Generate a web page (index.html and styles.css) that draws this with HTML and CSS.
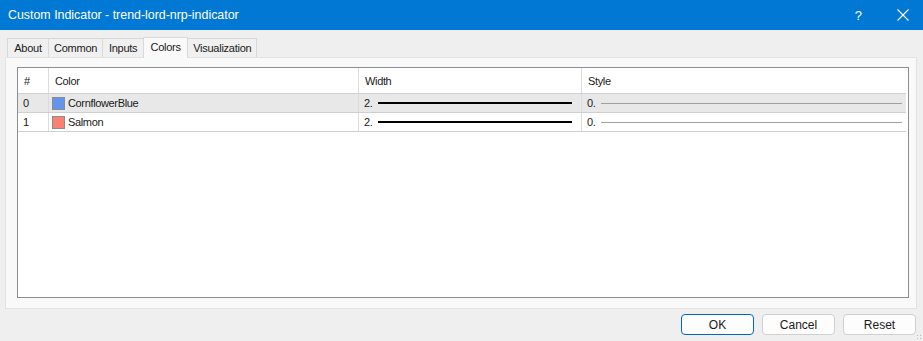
FILE: index.html
```html
<!DOCTYPE html>
<html lang="en">
<head>
    <meta charset="UTF-8">
    <title>Custom Indicator - trend-lord-nrp-indicator</title>
    <link rel="stylesheet" href="styles.css">
</head>
<body>
    <div class="dialog">
        <div class="titlebar">
            <span class="title">Custom Indicator - trend-lord-nrp-indicator</span>
            <div class="title-btns">
                <span class="help">?</span>
                <svg class="close" width="12" height="12" viewBox="0 0 12 12">
                    <path d="M0.5 0.5 L11.5 11.5 M11.5 0.5 L0.5 11.5" stroke="#ffffff" stroke-width="1.1" fill="none"/>
                </svg>
            </div>
        </div>

        <div class="body">
            <div class="tabs">
                <div class="tab">About</div>
                <div class="tab">Common</div>
                <div class="tab">Inputs</div>
                <div class="tab active">Colors</div>
                <div class="tab">Visualization</div>
            </div>

            <div class="panel">
                <div class="list">
                    <div class="row head">
                        <div class="cell num">#</div>
                        <div class="cell">Color</div>
                        <div class="cell">Width</div>
                        <div class="cell">Style</div>
                    </div>
                    <div class="row selected">
                        <div class="cell num">0</div>
                        <div class="cell"><span class="swatch blue"></span>CornflowerBlue</div>
                        <div class="cell">2. <span class="line thick"></span></div>
                        <div class="cell">0. <span class="line thin"></span></div>
                    </div>
                    <div class="row">
                        <div class="cell num">1</div>
                        <div class="cell"><span class="swatch salmon"></span>Salmon</div>
                        <div class="cell">2. <span class="line thick"></span></div>
                        <div class="cell">0. <span class="line thin"></span></div>
                    </div>
                </div>
            </div>

            <div class="buttons">
                <button class="btn default">OK</button>
                <button class="btn">Cancel</button>
                <button class="btn">Reset</button>
            </div>
            <div class="grip"></div>
        </div>
    </div>
</body>
</html>
```

FILE: styles.css
```css
html, body {
    margin: 0;
    padding: 0;
}
body {
    font-family: "Liberation Sans", Arial, sans-serif;
    font-size: 11px;
    color: #1a1a1a;
    background-color: #efefef;
}
.dialog {
    width: 923px;
    height: 341px;
    display: flex;
    flex-direction: column;
    background-color: #efefef;
}
.titlebar {
    height: 30px;
    background-color: #0078d4;
    color: #ffffff;
    display: flex;
    align-items: center;
    justify-content: space-between;
    padding: 0 14px 0 8px;
    box-sizing: border-box;
    flex-shrink: 0;
}
.title {
    font-size: 12.4px;
    padding-bottom: 1px;
}
.title-btns {
    display: flex;
    align-items: center;
    gap: 35px;
}
.help {
    font-size: 13px;
}
.close {
    display: block;
}
.body {
    position: relative;
    flex: 1;
    padding: 7px 6px 0 5px;
    display: flex;
    flex-direction: column;
}
.tabs {
    display: flex;
    align-items: flex-end;
    height: 20px;
    padding-left: 2px;
    position: relative;
    z-index: 1;
}
.tab {
    min-width: 42px;
    height: 19px;
    line-height: 19px;
    padding: 0 5px;
    text-align: center;
    background-color: #f0f0f0;
    border: 1px solid #d9d9d9;
    border-bottom: none;
    box-sizing: border-box;
    margin-right: -1px;
    font-size: 11px;
    letter-spacing: -0.25px;
}
.tab.active {
    min-width: 45px;
    height: 21px;
    line-height: 18px;
    background-color: #f9f9f9;
    margin-bottom: -1px;
}
.panel {
    height: 252px;
    background-color: #f9f9f9;
    border: 1px solid #e3e3e3;
    box-sizing: border-box;
    padding: 9px 7px 10px 11px;
}
.list {
    height: 100%;
    box-sizing: border-box;
    background-color: #ffffff;
    border: 1px solid #8c8d93;
}
.row {
    display: grid;
    grid-template-columns: 30px 310px 223px 1fr;
    height: 19px;
    border-bottom: 1px solid #cfcfcf;
    box-sizing: border-box;
    margin-right: 2px;
}
.row.head {
    height: 26px;
    border-bottom-color: #d2d2d2;
}
.row.selected {
    background-color: #e8e8e8;
}
.cell {
    display: flex;
    align-items: center;
    padding-left: 5px;
    border-left: 1px solid #dcdcdc;
    white-space: nowrap;
    font-size: 11px;
    letter-spacing: -0.35px;
}
.cell.num {
    border-left: none;
}
.head .cell {
    padding-left: 6px;
}
.swatch {
    width: 11px;
    height: 11px;
    border: 1px solid #8c8c8c;
    margin: 0 3px 0 -2px;
}
.swatch.blue {
    background-color: #6495ed;
}
.swatch.salmon {
    background-color: #fa8072;
}
.line {
    display: block;
    margin-left: 6px;
}
.line.thick {
    width: 194px;
    height: 2px;
    background-color: #000000;
}
.line.thin {
    width: 301px;
    height: 1px;
    background-color: #a0a0a0;
}
.buttons {
    display: flex;
    justify-content: flex-end;
    gap: 8px;
    margin-top: 5px;
    padding-right: 1px;
}
.btn {
    width: 73px;
    height: 21px;
    background-color: #fdfdfd;
    border: 1px solid #d0d0d0;
    border-radius: 4px;
    font-family: "Liberation Sans", Arial, sans-serif;
    font-size: 12px;
    color: #1a1a1a;
    padding: 0;
}
.btn.default {
    border-color: #0067c0;
}
.grip {
    position: absolute;
    right: 1px;
    bottom: 1px;
    width: 6px;
    height: 6px;
    background-image: radial-gradient(circle, #b5b5b5 0.8px, transparent 1px);
    background-size: 3px 3px;
}
```
